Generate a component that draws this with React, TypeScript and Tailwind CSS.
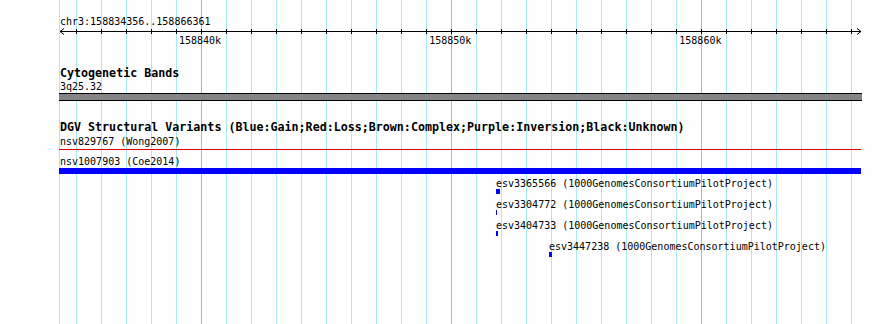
import React from 'react';

// grid: left edge line + one line per kb (25px), darker at 10kb marks
const gridXs = [59, ...Array.from({ length: 32 }, (_, i) => 76 + i * 25)];
const majorXs = [201, 451, 701];

const variants = [
  { name: 'esv3365566 (1000GenomesConsortiumPilotProject)', x: 437, w: 'w-[4px]' },
  { name: 'esv3304772 (1000GenomesConsortiumPilotProject)', x: 437, w: 'w-[1px]' },
  { name: 'esv3404733 (1000GenomesConsortiumPilotProject)', x: 437, w: 'w-[2px]' },
  { name: 'esv3447238 (1000GenomesConsortiumPilotProject)', x: 490, w: 'w-[3px]' },
];

function Ruler() {
  const ticks = Array.from({ length: 32 }, (_, i) => 17.5 + i * 25);
  return (
    <svg width={803} height={7} className="block mt-px" shapeRendering="crispEdges">
      <line x1={1} y1={3.5} x2={802} y2={3.5} stroke="#000" />
      {ticks.map((x) => (
        <line key={x} x1={x} y1={1} x2={x} y2={6} stroke="#000" />
      ))}
      <polyline points="5,0.5 1,3.5 5,6.5" fill="none" stroke="#000" shapeRendering="auto" />
      <polyline points="798,0.5 802,3.5 798,6.5" fill="none" stroke="#000" shapeRendering="auto" />
    </svg>
  );
}

export default function App() {
  return (
    <div className="relative w-[890px] h-[324px] overflow-hidden bg-[#fdfefd] text-black font-['DejaVu_Sans_Mono',monospace]">
      {/* grid lines behind the tracks */}
      <div className="absolute inset-0">
        {gridXs.map((x) => (
          <div
            key={x}
            className={`absolute top-0 bottom-0 w-px ${majorXs.includes(x) ? 'bg-[#88c4e4]' : 'bg-[#a8eaee]'}`}
            style={{ left: x }}
          />
        ))}
      </div>

      <div className="relative ml-[59px] w-[803px] pt-[16px] text-[10px] leading-[11px]">
        {/* ruler */}
        <div className="pl-px">chr3:158834356..158866361</div>
        <Ruler />
        <div className="flex gap-[208px] pl-[120px] h-[11px]">
          <span>158840k</span>
          <span>158850k</span>
          <span>158860k</span>
        </div>

        {/* cytogenetic bands */}
        <div className="mt-[21px] pl-px font-bold text-[11.67px] leading-[13px]">Cytogenetic Bands</div>
        <div className="mt-px pl-px">3q25.32</div>
        <div className="mt-px h-[8px] border-y border-black bg-[#868486]" />

        {/* DGV */}
        <div className="mt-[20px] pl-px font-bold text-[11.67px] leading-[13px] whitespace-nowrap">
          DGV Structural Variants (Blue:Gain;Red:Loss;Brown:Complex;Purple:Inversion;Black:Unknown)
        </div>
        <div className="mt-[2px] pl-px">nsv829767 (Wong2007)</div>
        <div className="mt-[2px] h-px w-[802px] bg-[#dd0000]" />
        <div className="mt-[6px] pl-px">nsv1007903 (Coe2014)</div>
        <div className="mt-px h-[6px] w-[802px] bg-[#0000ff]" />

        <div className="mt-[4px] flex flex-col">
          {variants.map((v) => (
            <div key={v.name} className="flex flex-col" style={{ marginLeft: v.x }}>
              <div className="whitespace-nowrap">{v.name}</div>
              <div className={`h-[5px] bg-[#0000ff] ${v.w}`} />
              <div className="h-[5px]" />
            </div>
          ))}
        </div>
      </div>
    </div>
  );
}
